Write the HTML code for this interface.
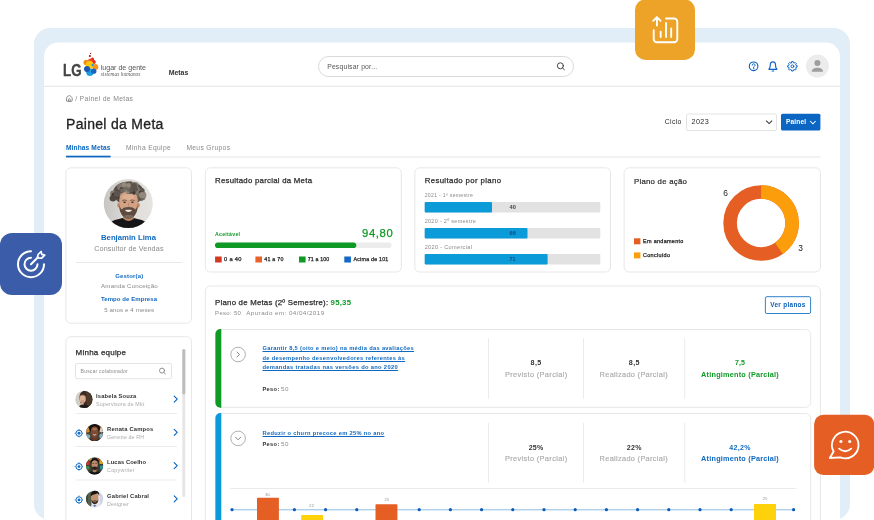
<!DOCTYPE html>
<html lang="pt-BR"><head><meta charset="utf-8"><title>Painel da Meta</title>
<style>
html,body{margin:0;padding:0;background:#fff;}
body{width:874px;height:520px;position:relative;overflow:hidden;font-family:"Liberation Sans",sans-serif;}
svg#g{position:absolute;left:0;top:0;width:874px;height:520px;display:block;}
.t{position:absolute;white-space:nowrap;display:block;}
.u{text-decoration:underline;text-decoration-thickness:0.55px;text-underline-offset:0.5px;}
#tx{position:absolute;left:0;top:0;width:874px;height:520px;will-change:transform;}

</style></head><body>
<svg id="g" width="874" height="520" viewBox="0 0 874 520">
<defs>
  <clipPath id="frameclip"><rect x="34" y="28" width="816" height="492" rx="16"/></clipPath>
  <clipPath id="av0"><circle cx="128.3" cy="203.6" r="24.5"/></clipPath>
  <clipPath id="av1"><circle cx="84" cy="399.4" r="8.6"/></clipPath>
  <clipPath id="av2"><circle cx="94.6" cy="432.5" r="8.6"/></clipPath>
  <clipPath id="av3"><circle cx="94.6" cy="465.8" r="8.6"/></clipPath>
  <clipPath id="av4"><circle cx="94.6" cy="499" r="8.6"/></clipPath>
</defs>
<!-- frame -->
<rect x="34" y="28" width="816" height="492" rx="16" fill="#e1eef7"/>
<g clip-path="url(#frameclip)">
<rect x="44" y="42.6" width="796" height="500" rx="14" fill="#fff"/>
<!-- header -->
<rect x="44" y="85.8" width="796" height="1" fill="#e4e4e4"/>
<!-- logo bubbles -->
<g>
 <circle cx="90.6" cy="53.4" r="0.6" fill="#9c1c16"/>
 <circle cx="89.9" cy="56" r="1.1" fill="#a81d17"/>
 <circle cx="92.4" cy="59.2" r="1.6" fill="#e02818"/>
 <circle cx="90.2" cy="60.6" r="2" fill="#f0501a"/>
 <circle cx="93.8" cy="62" r="2" fill="#e8281c"/>
 <circle cx="86.200" cy="62.500" r="2.700" fill="#f78a1c"/>
 <circle cx="95.3" cy="67.1" r="3" fill="#f7931e"/>
 <circle cx="89.700" cy="65" r="3.900" fill="#fdc70c"/>
 <circle cx="92.7" cy="65" r="1.2" fill="#1e9be0"/>
 <circle cx="89.9" cy="72.3" r="3.7" fill="#1aa0e0"/>
 <circle cx="93.8" cy="71.2" r="2.6" fill="#1c63c0"/>
 <circle cx="87" cy="68.9" r="3" fill="#1f57b0"/>
</g>
<!-- search pill -->
<rect x="318.5" y="56.5" width="255" height="20" rx="10" fill="#fff" stroke="#d9d9d9" stroke-width="1"/>
<g fill="none" stroke="#444" stroke-width="1" stroke-linecap="round"><circle cx="560.4" cy="65.8" r="3"/><path d="M562.6 68 L564.4 69.8"/></g>
<!-- header icons -->
<g fill="none" stroke="#0b62c4" stroke-width="1.150" stroke-linecap="round" stroke-linejoin="round">
 <circle cx="753.600" cy="66.300" r="4.300"/>
 <path d="M752.200 65.200 a1.400 1.400 0 1 1 2.100 1.200 c-0.550 0.300 -0.700 0.600 -0.700 1.100" stroke-width="1"/>
 <circle cx="753.600" cy="68.700" r="0.350" fill="#0b62c4" stroke-width="0.500"/>
 <path d="M768.900 69.300 h8 c-1 -0.800 -1.300 -1.700 -1.300 -3.500 c0 -2.500 -1.200 -3.900 -2.700 -3.900 c-1.500 0 -2.700 1.400 -2.700 3.900 c0 1.800 -0.300 2.700 -1.300 3.500 z"/>
 <path d="M772.100 71 h1.600"/>
 <path d="M791.42 62.73 L791.58 61.62 L793.22 61.62 L793.38 62.73 L794.23 63.09 L795.13 62.41 L796.29 63.57 L795.61 64.47 L795.97 65.32 L797.08 65.48 L797.08 67.12 L795.97 67.28 L795.61 68.13 L796.29 69.03 L795.13 70.19 L794.23 69.51 L793.38 69.87 L793.22 70.98 L791.58 70.98 L791.42 69.87 L790.57 69.51 L789.67 70.19 L788.51 69.03 L789.19 68.13 L788.83 67.28 L787.72 67.12 L787.72 65.48 L788.83 65.32 L789.19 64.47 L788.51 63.57 L789.67 62.41 L790.57 63.09 Z" stroke-width="1"/>
 <circle cx="792.400" cy="66.300" r="1.400" stroke-width="1"/>
</g>
<circle cx="817.4" cy="66.1" r="11.5" fill="#ececec"/>
<circle cx="817.4" cy="63" r="3" fill="#9e9e9e"/>
<path d="M811.7 71.8 c0 -2.6 2.6 -4 5.7 -4 s5.7 1.4 5.7 4 z" fill="#9e9e9e"/>
<!-- breadcrumb home -->
<g fill="none" stroke="#777" stroke-width="0.850" stroke-linejoin="round" stroke-linecap="round"><path d="M66.400 98.200 q0 -0.600 0.500 -1 l1.900 -1.500 q0.500 -0.400 1 0 l1.900 1.500 q0.500 0.400 0.500 1 v2.200 q0 0.900 -0.900 0.900 h-4 q-0.900 0 -0.900 -0.900 z"/><path d="M68.400 101.200 v-1.600 q0 -0.900 0.900 -0.900 q0.900 0 0.900 0.900 v1.600"/></g>
<!-- select + button -->
<rect x="686.500" y="114" width="90" height="16.500" rx="1.500" fill="#fff" stroke="#e0e0e0" stroke-width="0.900"/>
<path d="M766.100 120.600 l3 3 l3 -3" fill="none" stroke="#333" stroke-width="1.050"/>
<rect x="781" y="113.8" width="39.4" height="16.8" rx="1.5" fill="#0a66c2"/>
<path d="M810.100 121 l2.800 2.800 l2.800 -2.800" fill="none" stroke="#fff" stroke-width="1.050"/>
<!-- tabs -->
<rect x="66" y="156.500" width="754.500" height="0.900" fill="#e2e2e2"/>
<rect x="66" y="155.700" width="44.600" height="1.700" fill="#0a66c2"/>
<!-- cards -->
<g fill="#fff" stroke="#e7e7e7" stroke-width="1">
 <rect x="65.9" y="167.8" width="125.6" height="155.4" rx="5"/>
 <rect x="65.9" y="336.7" width="125.6" height="200" rx="5"/>
 <rect x="205.3" y="167.8" width="196" height="104.2" rx="5"/>
 <rect x="414.8" y="167.8" width="195.7" height="104.2" rx="5"/>
 <rect x="624.1" y="167.8" width="196.3" height="104.2" rx="5"/>
 <rect x="205.3" y="286" width="615.1" height="250" rx="5"/>
</g>
<!-- profile avatar -->
<g clip-path="url(#av0)">
<defs><linearGradient id="bg0" x1="0" x2="1" y1="0" y2="0"><stop offset="0" stop-color="#c6c4c0"/><stop offset="0.45" stop-color="#dddbd7"/><stop offset="1" stop-color="#e6e4e0"/></linearGradient></defs>
<rect x="103" y="178" width="51" height="51" fill="url(#bg0)"/>
<path d="M106 232 c1 -9 6 -11.500 13 -13 l4.500 -1.200 c3 2.400 6.500 2.400 9.500 0 l4.500 1.200 c7 1.500 12 4 13 13 z" fill="#151517"/>
<path d="M123.200 211 h10.600 v7.200 c-3 3.600 -7.600 3.600 -10.600 0 z" fill="#b88563"/>
<ellipse cx="128.500" cy="193" rx="15.500" ry="11.500" fill="#574f48"/>
<circle cx="123.5" cy="191.7" r="2.8" fill="#4e463f"/>
<circle cx="136.1" cy="194.7" r="2.7" fill="#93897d"/>
<circle cx="121.5" cy="194.0" r="2.5" fill="#5d554d"/>
<circle cx="116.9" cy="196.1" r="3.1" fill="#4e463f"/>
<circle cx="142.3" cy="197.2" r="2.7" fill="#4e463f"/>
<circle cx="131.4" cy="188.7" r="3.4" fill="#4e463f"/>
<circle cx="130.2" cy="190.7" r="2.5" fill="#93897d"/>
<circle cx="118.3" cy="195.5" r="3.1" fill="#5d554d"/>
<circle cx="115.7" cy="195.4" r="2.1" fill="#4e463f"/>
<circle cx="129.8" cy="191.2" r="1.9" fill="#5d554d"/>
<circle cx="128.3" cy="187.2" r="3.0" fill="#81776c"/>
<circle cx="131.9" cy="188.3" r="2.3" fill="#5d554d"/>
<circle cx="134.7" cy="191.4" r="2.7" fill="#93897d"/>
<circle cx="128.3" cy="188.8" r="2.5" fill="#93897d"/>
<circle cx="137.5" cy="198.5" r="2.5" fill="#6f665d"/>
<circle cx="117.2" cy="193.9" r="1.9" fill="#3f3933"/>
<circle cx="115.6" cy="196.3" r="3.1" fill="#6f665d"/>
<circle cx="122.9" cy="190.0" r="2.6" fill="#81776c"/>
<circle cx="119.9" cy="197.3" r="2.2" fill="#3f3933"/>
<circle cx="132.8" cy="192.2" r="2.9" fill="#3f3933"/>
<circle cx="132.1" cy="186.4" r="2.5" fill="#3f3933"/>
<circle cx="123.3" cy="186.9" r="1.8" fill="#81776c"/>
<circle cx="122.3" cy="187.9" r="2.6" fill="#5d554d"/>
<circle cx="135.5" cy="193.4" r="2.2" fill="#81776c"/>
<circle cx="140.8" cy="196.2" r="2.1" fill="#81776c"/>
<circle cx="131.1" cy="184.5" r="3.1" fill="#93897d"/>
<circle cx="120.7" cy="190.8" r="2.4" fill="#81776c"/>
<circle cx="137.8" cy="197.9" r="2.1" fill="#5d554d"/>
<circle cx="132.4" cy="192.5" r="3.1" fill="#5d554d"/>
<circle cx="123.0" cy="193.6" r="2.5" fill="#6f665d"/>
<circle cx="132.3" cy="189.6" r="2.0" fill="#93897d"/>
<circle cx="142.5" cy="197.3" r="3.0" fill="#81776c"/>
<circle cx="143.2" cy="195.0" r="3.2" fill="#93897d"/>
<circle cx="124.5" cy="188.9" r="2.0" fill="#3f3933"/>
<circle cx="125.4" cy="190.5" r="3.4" fill="#81776c"/>
<circle cx="118.6" cy="194.1" r="1.9" fill="#4e463f"/>
<circle cx="131.3" cy="187.4" r="3.3" fill="#93897d"/>
<circle cx="112.3" cy="198.2" r="2.8" fill="#5d554d"/>
<circle cx="135.7" cy="185.1" r="2.8" fill="#81776c"/>
<circle cx="113.5" cy="193.9" r="3.4" fill="#81776c"/>
<circle cx="127.8" cy="189.1" r="2.0" fill="#3f3933"/>
<circle cx="123.4" cy="190.6" r="3.1" fill="#5d554d"/>
<circle cx="129.0" cy="189.9" r="3.3" fill="#6f665d"/>
<circle cx="116.6" cy="193.9" r="1.8" fill="#93897d"/>
<circle cx="119.9" cy="188.8" r="1.9" fill="#6f665d"/>
<circle cx="129.5" cy="184.1" r="2.4" fill="#5d554d"/>
<circle cx="130.1" cy="185.2" r="2.3" fill="#5d554d"/>
<circle cx="134.0" cy="186.0" r="3.0" fill="#5d554d"/>
<circle cx="141.7" cy="191.1" r="3.0" fill="#5d554d"/>
<circle cx="118.1" cy="192.4" r="3.0" fill="#4e463f"/>
<circle cx="138.5" cy="192.2" r="2.1" fill="#93897d"/>
<circle cx="140.6" cy="197.7" r="3.3" fill="#6f665d"/>
<circle cx="139.8" cy="197.7" r="2.2" fill="#5d554d"/>
<circle cx="127.4" cy="188.9" r="2.6" fill="#93897d"/>
<circle cx="139.6" cy="193.7" r="2.8" fill="#3f3933"/>
<circle cx="114.7" cy="195.9" r="3.3" fill="#3f3933"/>
<circle cx="137.5" cy="191.1" r="2.1" fill="#3f3933"/>
<circle cx="120.5" cy="186.9" r="3.4" fill="#81776c"/>
<circle cx="126.7" cy="185.5" r="1.9" fill="#5d554d"/>
<circle cx="120.5" cy="194.8" r="2.0" fill="#81776c"/>
<circle cx="136.3" cy="194.1" r="3.1" fill="#81776c"/>
<circle cx="134.0" cy="190.0" r="2.7" fill="#5d554d"/>
<circle cx="113.1" cy="198.4" r="3.0" fill="#4e463f"/>
<circle cx="130.0" cy="183.9" r="2.5" fill="#5d554d"/>
<circle cx="137.1" cy="194.3" r="2.2" fill="#6f665d"/>
<circle cx="128.6" cy="185.3" r="2.3" fill="#93897d"/>
<circle cx="126.1" cy="190.8" r="3.3" fill="#6f665d"/>
<circle cx="142.1" cy="195.2" r="3.1" fill="#93897d"/>
<circle cx="124.2" cy="184.5" r="2.6" fill="#93897d"/>
<circle cx="117.0" cy="193.8" r="3.2" fill="#5d554d"/>
<ellipse cx="118.700" cy="205" rx="1.500" ry="2.600" fill="#c08c6c"/><ellipse cx="138.300" cy="205" rx="1.500" ry="2.600" fill="#c08c6c"/>
<path d="M119.300 200 c0 -6 4 -8.500 9.200 -8.500 s9.200 2.500 9.200 8.500 v5 c0 8 -4.500 13.500 -9.200 13.500 s-9.200 -5.500 -9.200 -13.500 z" fill="#d3a183"/>
<ellipse cx="128.500" cy="197" rx="6" ry="3" fill="#ddb094"/>
<path d="M119.300 204 c0.600 3 1.200 4.500 2.600 5.500 c1.200 -1.600 3.600 -2.400 6.600 -2.400 s5.400 0.800 6.600 2.400 c1.400 -1 2 -2.500 2.600 -5.500 v2 c0 7.500 -4.500 12.700 -9.200 12.700 s-9.200 -5.200 -9.200 -12.700 z" fill="#5e4b3f"/>
<path d="M123.500 216 c3 2.800 7 2.800 10 0 c-1 -1.500 -9 -1.500 -10 0z" fill="#7d6a5c"/>
<path d="M124.800 210 c2.400 -0.800 5 -0.800 7.400 0 c-1.600 2.600 -5.800 2.600 -7.400 0z" fill="#f4ece6"/>
<path d="M124.800 210 c2.400 -0.800 5 -0.800 7.400 0" fill="none" stroke="#7a4a3a" stroke-width="0.500"/>
<g fill="#3a2c24"><ellipse cx="124.600" cy="202.300" rx="1.300" ry="0.700"/><ellipse cx="132.400" cy="202.300" rx="1.300" ry="0.700"/></g>
<g fill="none" stroke="#5a463a" stroke-width="0.700" stroke-linecap="round"><path d="M122.600 200.500 q2 -1 4 -0.200"/><path d="M130.400 200.300 q2 -0.800 4 0.200"/></g>
<path d="M128.500 202.500 v3.600 q0.800 0.800 1.800 0.200" fill="none" stroke="#b5805f" stroke-width="0.600"/>
<circle cx="130.6" cy="192.4" r="1.7" fill="#5d554d"/>
<circle cx="128.0" cy="192.1" r="2.1" fill="#6f665d"/>
<circle cx="132.0" cy="191.2" r="2.0" fill="#4e463f"/>
<circle cx="135.8" cy="188.8" r="1.7" fill="#4e463f"/>
<circle cx="133.7" cy="191.0" r="2.1" fill="#4e463f"/>
<circle cx="127.4" cy="191.6" r="2.1" fill="#93897d"/>
<circle cx="122.8" cy="189.9" r="2.1" fill="#81776c"/>
<circle cx="128.6" cy="189.7" r="2.1" fill="#6f665d"/>
<circle cx="136.5" cy="193.0" r="1.7" fill="#81776c"/>
<circle cx="121.6" cy="189.1" r="2.0" fill="#4e463f"/>
<circle cx="131.8" cy="190.6" r="1.7" fill="#6f665d"/>
<circle cx="133.9" cy="193.0" r="1.7" fill="#3f3933"/>
<circle cx="131.2" cy="190.3" r="1.8" fill="#5d554d"/>
<circle cx="137.4" cy="189.6" r="2.5" fill="#81776c"/>
<circle cx="135.8" cy="189.3" r="2.2" fill="#5d554d"/>
<circle cx="122.1" cy="190.7" r="2.1" fill="#6f665d"/>
</g>
<rect x="76" y="262" width="106.500" height="0.8" fill="#e4e4e4"/>
<!-- minha equipe -->
<rect x="75.500" y="363.500" width="96" height="15.200" rx="1.5" fill="#fff" stroke="#e4e4e4" stroke-width="1"/>
<g fill="none" stroke="#777" stroke-width="0.8" stroke-linecap="round"><circle cx="162" cy="370.600" r="2.500"/><path d="M163.900 372.500 l1.500 1.500"/></g>
<rect x="182.300" y="349" width="3" height="148" rx="1.500" fill="#e6e6e6"/>
<rect x="182.300" y="349" width="3" height="45.500" rx="1.500" fill="#bdbdbd"/>
<g fill="#e6e6e6"><rect x="75.500" y="413.100" width="101.500" height="0.800"/><rect x="75.500" y="446.200" width="101.500" height="0.800"/><rect x="75.500" y="479.600" width="101.500" height="0.800"/></g>
<!-- avatars -->
<g clip-path="url(#av1)">
<rect x="75" y="390" width="18" height="19" fill="#e4e0db"/>
<rect x="75" y="390" width="6" height="19" fill="#d2cec8"/>
<path d="M79.500 397.500 c0 -5 3 -7 6 -7 c4.500 0 7.500 3.500 7.500 8.500 c0 4 -1 7 -2.500 9.500 h-6 c-2 -2 -5 -6 -5 -11z" fill="#3b2a20"/>
<path d="M86 392 c3.500 0.500 6 4 6 8 c0 3 -1.500 6 -3 8 l-2.500 -1 z" fill="#4e392b"/>
<ellipse cx="82.700" cy="398.800" rx="3.100" ry="4.300" fill="#dcae92"/>
<path d="M80 395.600 c1.500 -1.800 4.500 -2 6 0.400 c-1 -0.400 -4 -1 -6 -0.400z" fill="#3b2a20"/>
<path d="M81.200 400.800 q1.500 1.200 3 0" fill="none" stroke="#a85a4a" stroke-width="0.500"/>
<path d="M81.500 402.500 l2.500 1 v5 h-6 z" fill="#d0a084"/>
<path d="M78 409 c0.500 -3 3 -4.500 6 -4.500 s5 1.500 6 4.500z" fill="#1c1a1a"/>
</g>
<g clip-path="url(#av2)">
<rect x="85" y="423" width="19" height="19" fill="#4a4038"/>
<circle cx="87.500" cy="430" r="2.500" fill="#c98a3c"/><circle cx="88" cy="436.500" r="2.200" fill="#7fb0b8"/><circle cx="101.500" cy="430" r="2.400" fill="#d8d0c0"/><circle cx="101.800" cy="436" r="2.500" fill="#86b4c4"/><circle cx="99.500" cy="426" r="1.800" fill="#b87a3a"/>
<ellipse cx="94.600" cy="428.600" rx="5.600" ry="4.600" fill="#17120f"/>
<path d="M90.800 431 c0 -3 1.600 -4.600 3.800 -4.600 s3.800 1.600 3.800 4.600 c0 4 -1.600 6.800 -3.800 6.800 s-3.800 -2.800 -3.800 -6.800z" fill="#7d4a34"/>
<ellipse cx="94.600" cy="429.200" rx="2.400" ry="1.400" fill="#a8704f"/>
<path d="M93 434.600 q1.600 1.400 3.200 0 q-1.600 0.300 -3.200 0z" fill="#f2e8e0" stroke="#f2e8e0" stroke-width="0.300"/>
<path d="M87 443 c0.800 -4 3.600 -5 7.600 -5 s6.800 1 7.600 5z" fill="#6a3c2a"/>
<path d="M86 443 c1 -2.500 3 -3.600 5 -4 l3.600 2.400 l3.600 -2.400 c2 0.400 4 1.500 5 4z" fill="#24201e"/>
</g>
<g clip-path="url(#av3)">
<rect x="85" y="456" width="19" height="19" fill="#3c3a30"/>
<rect x="85.500" y="461" width="4" height="4" fill="#c0392b"/><rect x="86" y="466" width="3.500" height="3.500" fill="#3f8a4a"/><rect x="99.500" y="460" width="3.500" height="4" fill="#d4a72c"/><rect x="100" y="465.500" width="3.500" height="4" fill="#2f8f9a"/><rect x="97" y="457" width="3" height="3" fill="#b5452f"/><rect x="89" y="457.500" width="3" height="3" fill="#c9a03a"/>
<path d="M87 476 c0.500 -3 2.500 -4.300 4.500 -4.800 l3.100 1.800 l3.100 -1.800 c2 0.500 4 1.800 4.500 4.800z" fill="#141416"/>
<rect x="93" y="468" width="3.400" height="4" fill="#a87a5e"/>
<ellipse cx="94.700" cy="461.800" rx="3.900" ry="3.600" fill="#15110f"/>
<path d="M91.500 464 c0 -2.600 1.400 -3.800 3.200 -3.800 s3.200 1.200 3.200 3.800 c0 3.600 -1.400 6 -3.200 6 s-3.200 -2.400 -3.200 -6z" fill="#bd8c6e"/>
<path d="M91.500 465 c0.300 1.200 0.800 1.800 1.400 2.200 c0.600 -0.800 3 -0.800 3.600 0 c0.600 -0.400 1.100 -1 1.400 -2.200 c0 3.200 -1.400 5 -3.200 5 s-3.200 -1.800 -3.200 -5z" fill="#2a1f1a"/>
<path d="M92.300 463.400 h1.800 M95.300 463.400 h1.800" stroke="#1a1412" stroke-width="0.500" fill="none"/>
</g>
<g clip-path="url(#av4)">
<rect x="85" y="490" width="19" height="19" fill="#e6e6ee"/>
<rect x="85" y="490" width="6.500" height="19" fill="#56604e"/>
<rect x="85" y="490" width="3" height="19" fill="#3e4a3a"/>
<rect x="100" y="490" width="4" height="19" fill="#d2d4e4"/>
<path d="M88 510 c0.500 -3.500 3 -5 6.700 -5 s6.200 1.500 6.700 5z" fill="#dfe6f2"/>
<path d="M93 505 l1.700 2.200 l1.700 -2.200z" fill="#5a78b0"/>
<path d="M91.200 497.600 c0 -3 1.500 -4.600 3.600 -4.600 s3.600 1.600 3.600 4.600 c0 4 -1.500 6.600 -3.600 6.600 s-3.600 -2.600 -3.600 -6.600z" fill="#c4916f"/>
<path d="M90.800 496.400 c-0.600 -4 1.600 -6 4.200 -6 c2.800 0 4.800 2 4.200 5.800 c-0.600 -1.800 -1.200 -2.400 -2 -2.600 c-2 0.600 -4.600 0.800 -6.400 2.800z" fill="#1a1512"/>
<path d="M91.200 498.800 c0.300 1.200 0.800 1.900 1.400 2.300 c0.700 -0.800 3.700 -0.800 4.400 0 c0.600 -0.400 1.100 -1.100 1.400 -2.300 c0 3.400 -1.500 5.400 -3.600 5.400 s-3.600 -2 -3.600 -5.400z" fill="#35271f"/>
<path d="M93.300 501.500 q1.500 0.900 3 0" stroke="#f0e6de" stroke-width="0.500" fill="none"/>
</g>
<!-- row icons -->
<g fill="none" stroke="#1470c8" stroke-width="1"><circle cx="79" cy="433.3" r="3.100"/><path d="M79 429.0 v0.900 M79 436.4 v0.900 M74.7 433.3 h0.900 M82.1 433.3 h0.900" stroke-width="0.900"/></g><circle cx="79" cy="433.3" r="1.450" fill="#1470c8"/>
<g fill="none" stroke="#1470c8" stroke-width="1"><circle cx="79" cy="466.6" r="3.100"/><path d="M79 462.3 v0.900 M79 469.7 v0.900 M74.7 466.6 h0.900 M82.1 466.6 h0.900" stroke-width="0.900"/></g><circle cx="79" cy="466.6" r="1.450" fill="#1470c8"/>
<g fill="none" stroke="#1470c8" stroke-width="1"><circle cx="79" cy="499.9" r="3.100"/><path d="M79 495.6 v0.900 M79 503.0 v0.900 M74.7 499.9 h0.900 M82.1 499.9 h0.900" stroke-width="0.900"/></g><circle cx="79" cy="499.9" r="1.450" fill="#1470c8"/>
<g fill="none" stroke="#0a66c2" stroke-width="1.150" stroke-linecap="round" stroke-linejoin="round">
 <path d="M174.200 396.200 l3 3 l-3 3"/><path d="M174.200 429.300 l3 3 l-3 3"/><path d="M174.200 462.600 l3 3 l-3 3"/><path d="M174.200 495.800 l3 3 l-3 3"/>
</g>
<!-- resultado parcial -->
<rect x="215" y="242.400" width="176.500" height="5.600" rx="2.800" fill="#ececec"/>
<rect x="215" y="242.400" width="141.300" height="5.600" rx="2.800" fill="#0f9a26"/>
<rect x="215.100" y="256.500" width="6.600" height="6" fill="#d13a20"/>
<rect x="255.400" y="256.500" width="6.600" height="6" fill="#e8622a"/>
<rect x="299" y="256.500" width="6.600" height="6" fill="#0f9a26"/>
<rect x="344.300" y="256.500" width="6.600" height="6" fill="#1268c4"/>
<!-- resultado por plano -->
<g fill="#e2e2e2"><rect x="424.700" y="202" width="175.600" height="10.400" rx="1"/><rect x="424.700" y="228" width="175.600" height="10.500" rx="1"/><rect x="424.700" y="254.100" width="175.600" height="10.400" rx="1"/></g>
<g fill="#0a9bd8"><rect x="424.700" y="202" width="67.300" height="10.400" rx="1"/><rect x="424.700" y="228" width="102.800" height="10.500" rx="1"/><rect x="424.700" y="254.100" width="122.900" height="10.400" rx="1"/></g>
<!-- donut -->
<g fill="none" stroke-width="13.600">
 <circle cx="761.100" cy="223" r="31" stroke="#e55f25"/>
 <path d="M761.100 192 A31 31 0 0 1 778.880 248.390" stroke="#fc9d0c"/>
</g>
<rect x="634" y="238.300" width="6.400" height="6" fill="#e55f25"/>
<rect x="634" y="252.400" width="6.400" height="6" fill="#fc9d0c"/>
<!-- ver planos -->
<rect x="765.400" y="296.700" width="45.200" height="16.800" rx="1.500" fill="#fff" stroke="#1a73c5" stroke-width="0.9"/>
<!-- goal rows -->
<g fill="#fff" stroke="#e7e7e7" stroke-width="1">
 <rect x="215.400" y="329.500" width="595.300" height="77.800" rx="5"/>
 <rect x="215.400" y="413.500" width="595.300" height="130" rx="5"/>
</g>
<path d="M221.300 329 v78.800 h-0.900 a5 5 0 0 1 -5 -5 v-68.800 a5 5 0 0 1 5 -5 z" fill="#0f9a26"/>
<path d="M221.300 413 v130 h-5.900 v-125 a5 5 0 0 1 5 -5 z" fill="#0a9bd8"/>
<g fill="none" stroke="#9a9a9a" stroke-width="0.800"><circle cx="238.100" cy="354.500" r="7.300"/><circle cx="238.100" cy="438.400" r="7.300"/></g>
<g fill="none" stroke="#777" stroke-width="0.900" stroke-linecap="round" stroke-linejoin="round"><path d="M237 352 l2.500 2.500 l-2.500 2.500"/><path d="M235.600 437.300 l2.500 2.500 l2.500 -2.500"/></g>
<g fill="#e9e9e9">
 <rect x="488" y="338.200" width="0.900" height="60.600"/><rect x="583" y="338.200" width="0.900" height="60.600"/><rect x="684.300" y="338.200" width="0.900" height="60.600"/>
 <rect x="488" y="422.800" width="0.900" height="60"/><rect x="583" y="422.800" width="0.900" height="60"/><rect x="684.300" y="422.800" width="0.900" height="60"/>
 <rect x="230" y="488.100" width="566.500" height="0.900"/>
</g>
<!-- chart -->
<rect x="232" y="509.050" width="562" height="1.300" fill="#a8cdec"/>
<g fill="#0a5cb8" id="dots">
<circle cx="232.0" cy="509.700" r="1.600"/><circle cx="263.2" cy="509.700" r="1.600"/><circle cx="294.4" cy="509.700" r="1.600"/><circle cx="325.6" cy="509.700" r="1.600"/><circle cx="356.8" cy="509.700" r="1.600"/><circle cx="388.0" cy="509.700" r="1.600"/><circle cx="419.2" cy="509.700" r="1.600"/><circle cx="450.4" cy="509.700" r="1.600"/><circle cx="481.6" cy="509.700" r="1.600"/><circle cx="512.8" cy="509.700" r="1.600"/><circle cx="544.0" cy="509.700" r="1.600"/><circle cx="575.2" cy="509.700" r="1.600"/><circle cx="606.4" cy="509.700" r="1.600"/><circle cx="637.6" cy="509.700" r="1.600"/><circle cx="668.8" cy="509.700" r="1.600"/><circle cx="700.0" cy="509.700" r="1.600"/><circle cx="731.2" cy="509.700" r="1.600"/><circle cx="762.4" cy="509.700" r="1.600"/><circle cx="793.6" cy="509.700" r="1.600"/>
</g>
<rect x="257" y="497.800" width="21.900" height="30" rx="0.800" fill="#e55f25"/>
<rect x="301.200" y="515" width="21.900" height="10" rx="0.800" fill="#fdd20a"/>
<rect x="375.500" y="504.200" width="21.900" height="20" rx="0.800" fill="#e55f25"/>
<rect x="754" y="504.100" width="22" height="20" rx="0.800" fill="#fdd20a"/>
</g>
<!-- floating boxes -->
<rect x="0" y="233" width="62" height="62" rx="12" fill="#3a5ca9"/>
<g fill="none" stroke="#fff" stroke-width="2" stroke-linecap="round" stroke-linejoin="round">
 <path d="M31 251.200 A13 13 0 1 0 44 264.200"/>
 <path d="M31 257.700 A6.500 6.500 0 1 0 37.500 264.200"/>
 <path d="M31 264.200 L38 257.200"/>
 <path d="M37.300 257.900 l0.800 -3.400 l3 -3 l0.700 2.900 l2.900 0.700 l-3 3 z" stroke-width="1.700"/>
</g>
<rect x="635" y="-0.600" width="60" height="60.500" rx="10.500" fill="#eda228"/>
<g fill="none" stroke="#fff" stroke-width="1.900" stroke-linecap="round" stroke-linejoin="round">
 <path d="M666 18.500 h8 a3.300 3.300 0 0 1 3.300 3.300 v17.200 a3.300 3.300 0 0 1 -3.300 3.300 h-17 a3.300 3.300 0 0 1 -3.300 -3.300 v-8.700"/>
 <path d="M656.900 25.600 v-8.200 M653.200 20.800 l3.700 -3.700 l3.700 3.700"/>
 <path d="M660.700 31.800 v5.200 M666 23 v14 M671.200 28.400 v8.600"/>
</g>
<rect x="814.100" y="414.800" width="60" height="60.200" rx="9.200" fill="#e55f25"/>
<g fill="none" stroke="#fff" stroke-width="1.800" stroke-linecap="round" stroke-linejoin="round">
 <path d="M833.600 451.500 A13.300 13.300 0 1 1 840.300 457.400 L829.800 458 z"/>
 <path d="M839.200 448.600 q6 5.400 12 0"/>
</g>
<circle cx="840.900" cy="441.500" r="1.550" fill="#fff"/><circle cx="849.700" cy="441.500" r="1.550" fill="#fff"/>
</svg>

<div id="tx">
<span class="t " id="t0" style="left:63.4px;top:62.45px;font-size:15.8px;line-height:18.96px;font-weight:700;color:#444;letter-spacing:0.000px;transform:scaleX(0.8433);transform-origin:0 50%;-webkit-text-stroke:0.35px #444;">LG</span>
<span class="t " id="t1" style="left:100.7px;top:63.68px;font-size:7.1px;line-height:8.52px;font-weight:400;color:#555;letter-spacing:-0.005px;">lugar de gente</span>
<span class="t " id="t2" style="left:100.7px;top:71.48px;font-size:5.2px;line-height:6.24px;font-weight:400;color:#555;letter-spacing:0.138px;font-family:'Liberation Serif', serif;font-style:italic;">sistemas humanos</span>
<span class="t " id="t3" style="left:168.7px;top:68.77px;font-size:7px;line-height:8.4px;font-weight:700;color:#333;letter-spacing:-0.061px;">Metas</span>
<span class="t " id="t4" style="left:327.2px;top:62.96px;font-size:6.8px;line-height:8.16px;font-weight:400;color:#555;letter-spacing:0.184px;">Pesquisar por...</span>
<span class="t " id="t5" style="left:75.2px;top:94.96px;font-size:6.8px;line-height:8.16px;font-weight:400;color:#8a8a8a;letter-spacing:0.329px;">/ Painel de Metas</span>
<span class="t " id="t6" style="left:66px;top:116.15px;font-size:14px;line-height:16.8px;font-weight:400;color:#222;letter-spacing:0.307px;-webkit-text-stroke:0.3px #222;">Painel da Meta</span>
<span class="t " id="t7" style="left:664.8px;top:117.96px;font-size:6.8px;line-height:8.16px;font-weight:400;color:#2a2a2a;letter-spacing:0.374px;">Ciclo</span>
<span class="t " id="t8" style="left:691.5px;top:117.55px;font-size:7.24px;line-height:8.69px;font-weight:400;color:#2a2a2a;letter-spacing:0.398px;">2023</span>
<span class="t " id="t9" style="left:786px;top:118.15px;font-size:6.6px;line-height:7.92px;font-weight:700;color:#fff;letter-spacing:0.153px;">Painel</span>
<span class="t " id="t10" style="left:66px;top:144.15px;font-size:6.6px;line-height:7.92px;font-weight:700;color:#0a66c2;letter-spacing:0.105px;">Minhas Metas</span>
<span class="t " id="t11" style="left:126px;top:144.09px;font-size:6.67px;line-height:8.0px;font-weight:400;color:#8a8a8a;letter-spacing:0.367px;">Minha Equipe</span>
<span class="t " id="t12" style="left:186.4px;top:144.10px;font-size:6.66px;line-height:7.99px;font-weight:400;color:#8a8a8a;letter-spacing:0.366px;">Meus Grupos</span>
<span class="t " id="t13" style="left:101px;top:232.83px;font-size:8px;line-height:9.6px;font-weight:700;color:#1068c0;letter-spacing:0.000px;transform:scaleX(0.9665);transform-origin:0 50%;">Benjamin Lima</span>
<span class="t " id="t14" style="left:94.2px;top:244.59px;font-size:7.2px;line-height:8.64px;font-weight:400;color:#8a8a8a;letter-spacing:0.143px;">Consultor de Vendas</span>
<span class="t " id="t15" style="left:115.2px;top:272.72px;font-size:6px;line-height:7.2px;font-weight:700;color:#1068c0;letter-spacing:0.179px;">Gestor(a)</span>
<span class="t " id="t16" style="left:101px;top:281.53px;font-size:6.2px;line-height:7.44px;font-weight:400;color:#8a8a8a;letter-spacing:0.179px;">Amanda Conceição</span>
<span class="t " id="t17" style="left:101px;top:295.72px;font-size:6px;line-height:7.2px;font-weight:700;color:#1068c0;letter-spacing:0.073px;">Tempo de Empresa</span>
<span class="t " id="t18" style="left:104.2px;top:305.53px;font-size:6.2px;line-height:7.44px;font-weight:400;color:#8a8a8a;letter-spacing:0.077px;">5 anos e 4 meses</span>
<span class="t " id="t19" style="left:75.6px;top:347.83px;font-size:8px;line-height:9.6px;font-weight:400;color:#2a2a2a;letter-spacing:0.214px;-webkit-text-stroke:0.25px #2a2a2a;">Minha equipe</span>
<span class="t " id="t20" style="left:80.6px;top:367.67px;font-size:5px;line-height:6.0px;font-weight:400;color:#8a8a8a;letter-spacing:0.220px;">Buscar colaborador</span>
<span class="t " id="t21" style="left:96px;top:392.91px;font-size:5.8px;line-height:6.96px;font-weight:700;color:#333;letter-spacing:0.163px;">Isabela Souza</span>
<span class="t " id="t22" style="left:96px;top:401.38px;font-size:5.3px;line-height:6.36px;font-weight:400;color:#ababab;letter-spacing:0.151px;">Supervisora de Mkt</span>
<span class="t " id="t23" style="left:107.1px;top:425.91px;font-size:5.8px;line-height:6.96px;font-weight:700;color:#333;letter-spacing:0.199px;">Renata Campos</span>
<span class="t " id="t24" style="left:107.1px;top:434.38px;font-size:5.3px;line-height:6.36px;font-weight:400;color:#ababab;letter-spacing:0.106px;">Gerente de RH</span>
<span class="t " id="t25" style="left:107.1px;top:458.91px;font-size:5.8px;line-height:6.96px;font-weight:700;color:#333;letter-spacing:0.080px;">Lucas Coelho</span>
<span class="t " id="t26" style="left:107.1px;top:467.38px;font-size:5.3px;line-height:6.36px;font-weight:400;color:#ababab;letter-spacing:0.241px;">Copywriter</span>
<span class="t " id="t27" style="left:107.1px;top:492.91px;font-size:5.8px;line-height:6.96px;font-weight:700;color:#333;letter-spacing:0.174px;">Gabriel Cabral</span>
<span class="t " id="t28" style="left:107.1px;top:501.38px;font-size:5.3px;line-height:6.36px;font-weight:400;color:#ababab;letter-spacing:0.071px;">Designer</span>
<span class="t " id="t29" style="left:215px;top:176.02px;font-size:7.8px;line-height:9.36px;font-weight:400;color:#2a2a2a;letter-spacing:0.267px;-webkit-text-stroke:0.25px #2a2a2a;">Resultado parcial da Meta</span>
<span class="t " id="t30" style="left:215px;top:231.48px;font-size:5.2px;line-height:6.24px;font-weight:700;color:#0f9a26;letter-spacing:0.275px;">Aceitável</span>
<span class="t " id="t31" style="left:362px;top:226.72px;font-size:11.28px;line-height:13.54px;font-weight:400;color:#0f9a26;letter-spacing:0.620px;-webkit-text-stroke:0.25px #0f9a26;">94,80</span>
<span class="t " id="t32" style="left:224px;top:255.98px;font-size:5.73px;line-height:6.88px;font-weight:400;color:#222;letter-spacing:0.315px;-webkit-text-stroke:0.25px #222;">0 a 40</span>
<span class="t " id="t33" style="left:264.3px;top:256.38px;font-size:5.3px;line-height:6.36px;font-weight:400;color:#222;letter-spacing:0.235px;-webkit-text-stroke:0.25px #222;">41 a 70</span>
<span class="t " id="t34" style="left:307.8px;top:256.38px;font-size:5.3px;line-height:6.36px;font-weight:400;color:#222;letter-spacing:0.111px;-webkit-text-stroke:0.25px #222;">71 a 100</span>
<span class="t " id="t35" style="left:353.5px;top:256.38px;font-size:5.3px;line-height:6.36px;font-weight:400;color:#222;letter-spacing:0.219px;-webkit-text-stroke:0.25px #222;">Acima de 101</span>
<span class="t " id="t36" style="left:424.7px;top:176.02px;font-size:7.8px;line-height:9.36px;font-weight:400;color:#2a2a2a;letter-spacing:0.361px;-webkit-text-stroke:0.25px #2a2a2a;">Resultado por plano</span>
<span class="t " id="t37" style="left:424.7px;top:191.52px;font-size:5.16px;line-height:6.19px;font-weight:400;color:#8a8a8a;letter-spacing:0.284px;">2021 - 1º semestre</span>
<span class="t " id="t38" style="left:424.7px;top:218.21px;font-size:5.48px;line-height:6.58px;font-weight:400;color:#8a8a8a;letter-spacing:0.301px;">2020 - 2º semestre</span>
<span class="t " id="t39" style="left:424.7px;top:244.10px;font-size:5.6px;line-height:6.72px;font-weight:400;color:#8a8a8a;letter-spacing:0.308px;">2020 - Comercial</span>
<span class="t " id="t40" style="left:509.4px;top:204.04px;font-size:5.66px;line-height:6.79px;font-weight:700;color:#444;letter-spacing:0.311px;">40</span>
<span class="t " id="t41" style="left:509.4px;top:230.04px;font-size:5.66px;line-height:6.79px;font-weight:700;color:#1a4a7a;letter-spacing:0.311px;">66</span>
<span class="t " id="t42" style="left:509.6px;top:256.29px;font-size:5.4px;line-height:6.48px;font-weight:700;color:#1a4a7a;letter-spacing:0.000px;">71</span>
<span class="t " id="t43" style="left:634px;top:177.02px;font-size:7.8px;line-height:9.36px;font-weight:400;color:#2a2a2a;letter-spacing:0.245px;-webkit-text-stroke:0.2px #2a2a2a;">Plano de ação</span>
<span class="t " id="t44" style="left:723.2px;top:188.45px;font-size:8.4px;line-height:10.08px;font-weight:400;color:#222;letter-spacing:0.328px;">6</span>
<span class="t " id="t45" style="left:798.2px;top:243.45px;font-size:8.4px;line-height:10.08px;font-weight:400;color:#222;letter-spacing:0.328px;">3</span>
<span class="t " id="t46" style="left:643px;top:238.21px;font-size:5.48px;line-height:6.58px;font-weight:400;color:#222;letter-spacing:0.302px;-webkit-text-stroke:0.25px #222;">Em andamento</span>
<span class="t " id="t47" style="left:643px;top:252.23px;font-size:5.46px;line-height:6.55px;font-weight:400;color:#222;letter-spacing:0.300px;-webkit-text-stroke:0.25px #222;">Concluído</span>
<span class="t " id="t48" style="left:215.1px;top:298.02px;font-size:7.8px;line-height:9.36px;font-weight:400;color:#2a2a2a;letter-spacing:0.235px;-webkit-text-stroke:0.25px #2a2a2a;">Plano de Metas (2º Semestre):</span>
<span class="t " id="t49" style="left:330.6px;top:298.02px;font-size:7.8px;line-height:9.36px;font-weight:700;color:#0f9a26;letter-spacing:0.221px;">95,35</span>
<span class="t " id="t50" style="left:215.1px;top:309.76px;font-size:5.96px;line-height:7.15px;font-weight:400;color:#8a8a8a;letter-spacing:0.328px;">Peso: 50</span>
<span class="t " id="t51" style="left:246.2px;top:309.47px;font-size:6.26px;line-height:7.51px;font-weight:400;color:#8a8a8a;letter-spacing:0.436px;">Apurado em: 04/04/2019</span>
<span class="t " id="t52" style="left:770.2px;top:301.34px;font-size:6.4px;line-height:7.68px;font-weight:700;color:#0b5fb5;letter-spacing:0.319px;">Ver planos</span>
<span class="t u" id="t53" style="left:262.5px;top:344.98px;font-size:5.73px;line-height:6.88px;font-weight:700;color:#1068c0;letter-spacing:0.315px;">Garantir 8,5 (oito e meio) na média das avaliações</span>
<span class="t u" id="t54" style="left:262.5px;top:354.98px;font-size:5.73px;line-height:6.88px;font-weight:700;color:#1068c0;letter-spacing:0.315px;">de desempenho desenvolvedores referentes às</span>
<span class="t u" id="t55" style="left:262.5px;top:363.93px;font-size:5.78px;line-height:6.94px;font-weight:700;color:#1068c0;letter-spacing:0.318px;">demandas tratadas nas versões do ano 2020</span>
<span class="t " id="t56" style="left:262.5px;top:386.00px;font-size:5.71px;line-height:6.85px;font-weight:700;color:#333;letter-spacing:0.314px;">Peso:</span>
<span class="t " id="t57" style="left:281px;top:385.47px;font-size:6.26px;line-height:7.51px;font-weight:400;color:#8a8a8a;letter-spacing:0.640px;">50</span>
<span class="t " id="t58" style="left:530.6px;top:358.65px;font-size:7.13px;line-height:8.56px;font-weight:700;color:#333;letter-spacing:0.392px;">8,5</span>
<span class="t " id="t59" style="left:504.9px;top:371.40px;font-size:7.4px;line-height:8.88px;font-weight:400;color:#ababab;letter-spacing:0.349px;-webkit-text-stroke:0.15px #ababab;">Previsto (Parcial)</span>
<span class="t " id="t60" style="left:628.8px;top:358.65px;font-size:7.13px;line-height:8.56px;font-weight:700;color:#333;letter-spacing:0.392px;">8,5</span>
<span class="t " id="t61" style="left:599.6px;top:371.40px;font-size:7.4px;line-height:8.88px;font-weight:400;color:#ababab;letter-spacing:0.309px;-webkit-text-stroke:0.15px #ababab;">Realizado (Parcial)</span>
<span class="t " id="t62" style="left:735.1px;top:358.77px;font-size:7px;line-height:8.4px;font-weight:700;color:#0f9a26;letter-spacing:0.083px;">7,5</span>
<span class="t " id="t63" style="left:701.1px;top:371.49px;font-size:7.3px;line-height:8.76px;font-weight:700;color:#0f9a26;letter-spacing:0.215px;">Atingimento (Parcial)</span>
<span class="t u" id="t64" style="left:262.5px;top:429.98px;font-size:5.73px;line-height:6.88px;font-weight:700;color:#1068c0;letter-spacing:0.315px;">Reduzir o churn precoce em 25% no ano</span>
<span class="t " id="t65" style="left:262.5px;top:441.00px;font-size:5.71px;line-height:6.85px;font-weight:700;color:#333;letter-spacing:0.314px;">Peso:</span>
<span class="t " id="t66" style="left:281px;top:440.47px;font-size:6.26px;line-height:7.51px;font-weight:400;color:#8a8a8a;letter-spacing:0.640px;">50</span>
<span class="t " id="t67" style="left:528.7px;top:443.77px;font-size:7px;line-height:8.4px;font-weight:700;color:#333;letter-spacing:0.292px;">25%</span>
<span class="t " id="t68" style="left:504.9px;top:455.40px;font-size:7.4px;line-height:8.88px;font-weight:400;color:#ababab;letter-spacing:0.349px;-webkit-text-stroke:0.15px #ababab;">Previsto (Parcial)</span>
<span class="t " id="t69" style="left:626.8px;top:443.77px;font-size:7px;line-height:8.4px;font-weight:700;color:#333;letter-spacing:0.342px;">22%</span>
<span class="t " id="t70" style="left:599.6px;top:455.40px;font-size:7.4px;line-height:8.88px;font-weight:400;color:#ababab;letter-spacing:0.309px;-webkit-text-stroke:0.15px #ababab;">Realizado (Parcial)</span>
<span class="t " id="t71" style="left:729.3px;top:443.77px;font-size:7px;line-height:8.4px;font-weight:700;color:#1068c0;letter-spacing:0.360px;">42,2%</span>
<span class="t " id="t72" style="left:701.1px;top:455.49px;font-size:7.3px;line-height:8.76px;font-weight:700;color:#1068c0;letter-spacing:0.215px;">Atingimento (Parcial)</span>
<span class="t " id="t73" style="left:265.2px;top:492.68px;font-size:3.93px;line-height:4.72px;font-weight:400;color:#8a8a8a;letter-spacing:0.216px;">30</span>
<span class="t " id="t74" style="left:309.3px;top:503.76px;font-size:3.85px;line-height:4.62px;font-weight:400;color:#8a8a8a;letter-spacing:0.212px;">22</span>
<span class="t " id="t75" style="left:384.4px;top:497.76px;font-size:3.85px;line-height:4.62px;font-weight:400;color:#8a8a8a;letter-spacing:0.212px;">25</span>
<span class="t " id="t76" style="left:762.8px;top:496.76px;font-size:3.85px;line-height:4.62px;font-weight:400;color:#8a8a8a;letter-spacing:0.212px;">25</span>
</div>
</body></html>
